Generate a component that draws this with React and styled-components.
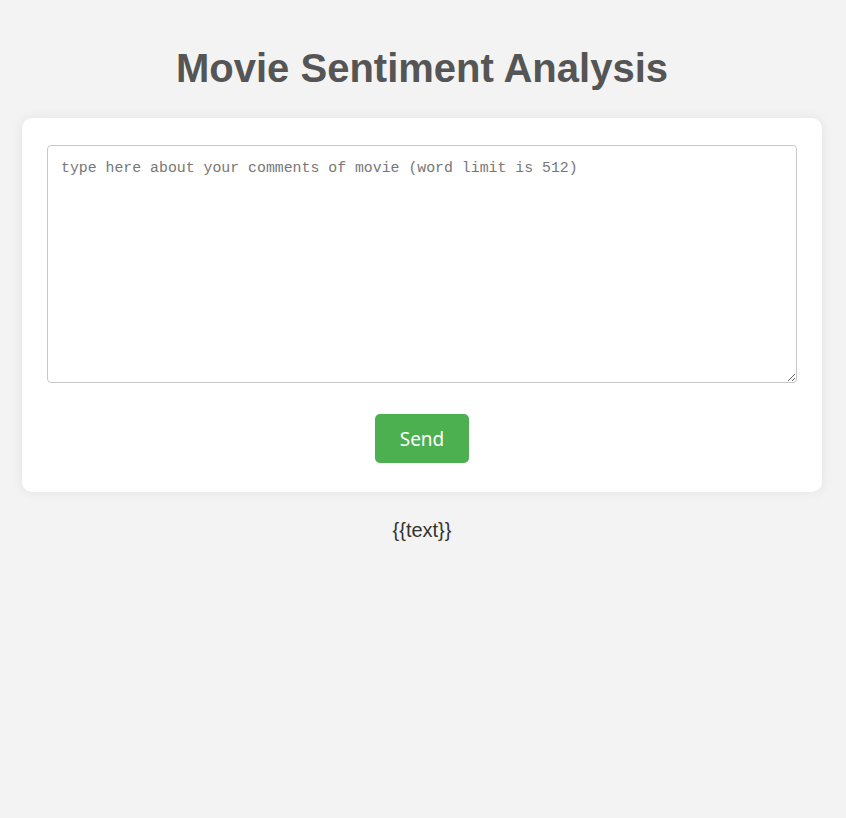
import React from 'react';
import styled, {createGlobalStyle} from 'styled-components';

const GlobalStyle = createGlobalStyle`
    body {
        margin:0;background:#f3f3f3;font-family:"Liberation Sans", Arial, sans-serif;
    }
`;

const Page = styled.div`
    padding:22px 24px 40px 22px;
`;

const Title = styled.h1`
    margin:22px 0 26px;text-align:center;font-size:40px;font-weight:bold;color:#555;line-height:48px;
`;

const Card = styled.div`
    background:#fff;border-radius:10px;padding:27px 25px 29px;
    box-shadow:0 0 12px rgba(0,0,0,0.07);
    display:flex;flex-direction:column;align-items:center;
`;

const Comment = styled.textarea`
    width:100%;height:238px;box-sizing:border-box;
    border:1px solid #c8c8c8;border-radius:4px;padding:14px 13px;
    font-family:"Liberation Mono", monospace;font-size:14.85px;color:#333;
    resize:both;outline:none;
    &::placeholder{ color:#777; }
`;

const SendButton = styled.button`
    margin-top:31px;width:94px;height:49px;border:0;border-radius:5px;
    background:#4caf50;color:#fff;font-family:"Noto Sans", sans-serif;font-size:19px;cursor:pointer;
`;

const Result = styled.p`
    margin:27px 0 0;text-align:center;font-size:20px;color:#333;
`;

const App = () => {
    return (
        <>
            <GlobalStyle />
            <Page>
                <Title>Movie Sentiment Analysis</Title>
                <Card>
                    <Comment placeholder="type here about your comments of movie (word limit is 512)" />
                    <SendButton>Send</SendButton>
                </Card>
                <Result>{'{{text}}'}</Result>
            </Page>
        </>
    )
}

export default App;
